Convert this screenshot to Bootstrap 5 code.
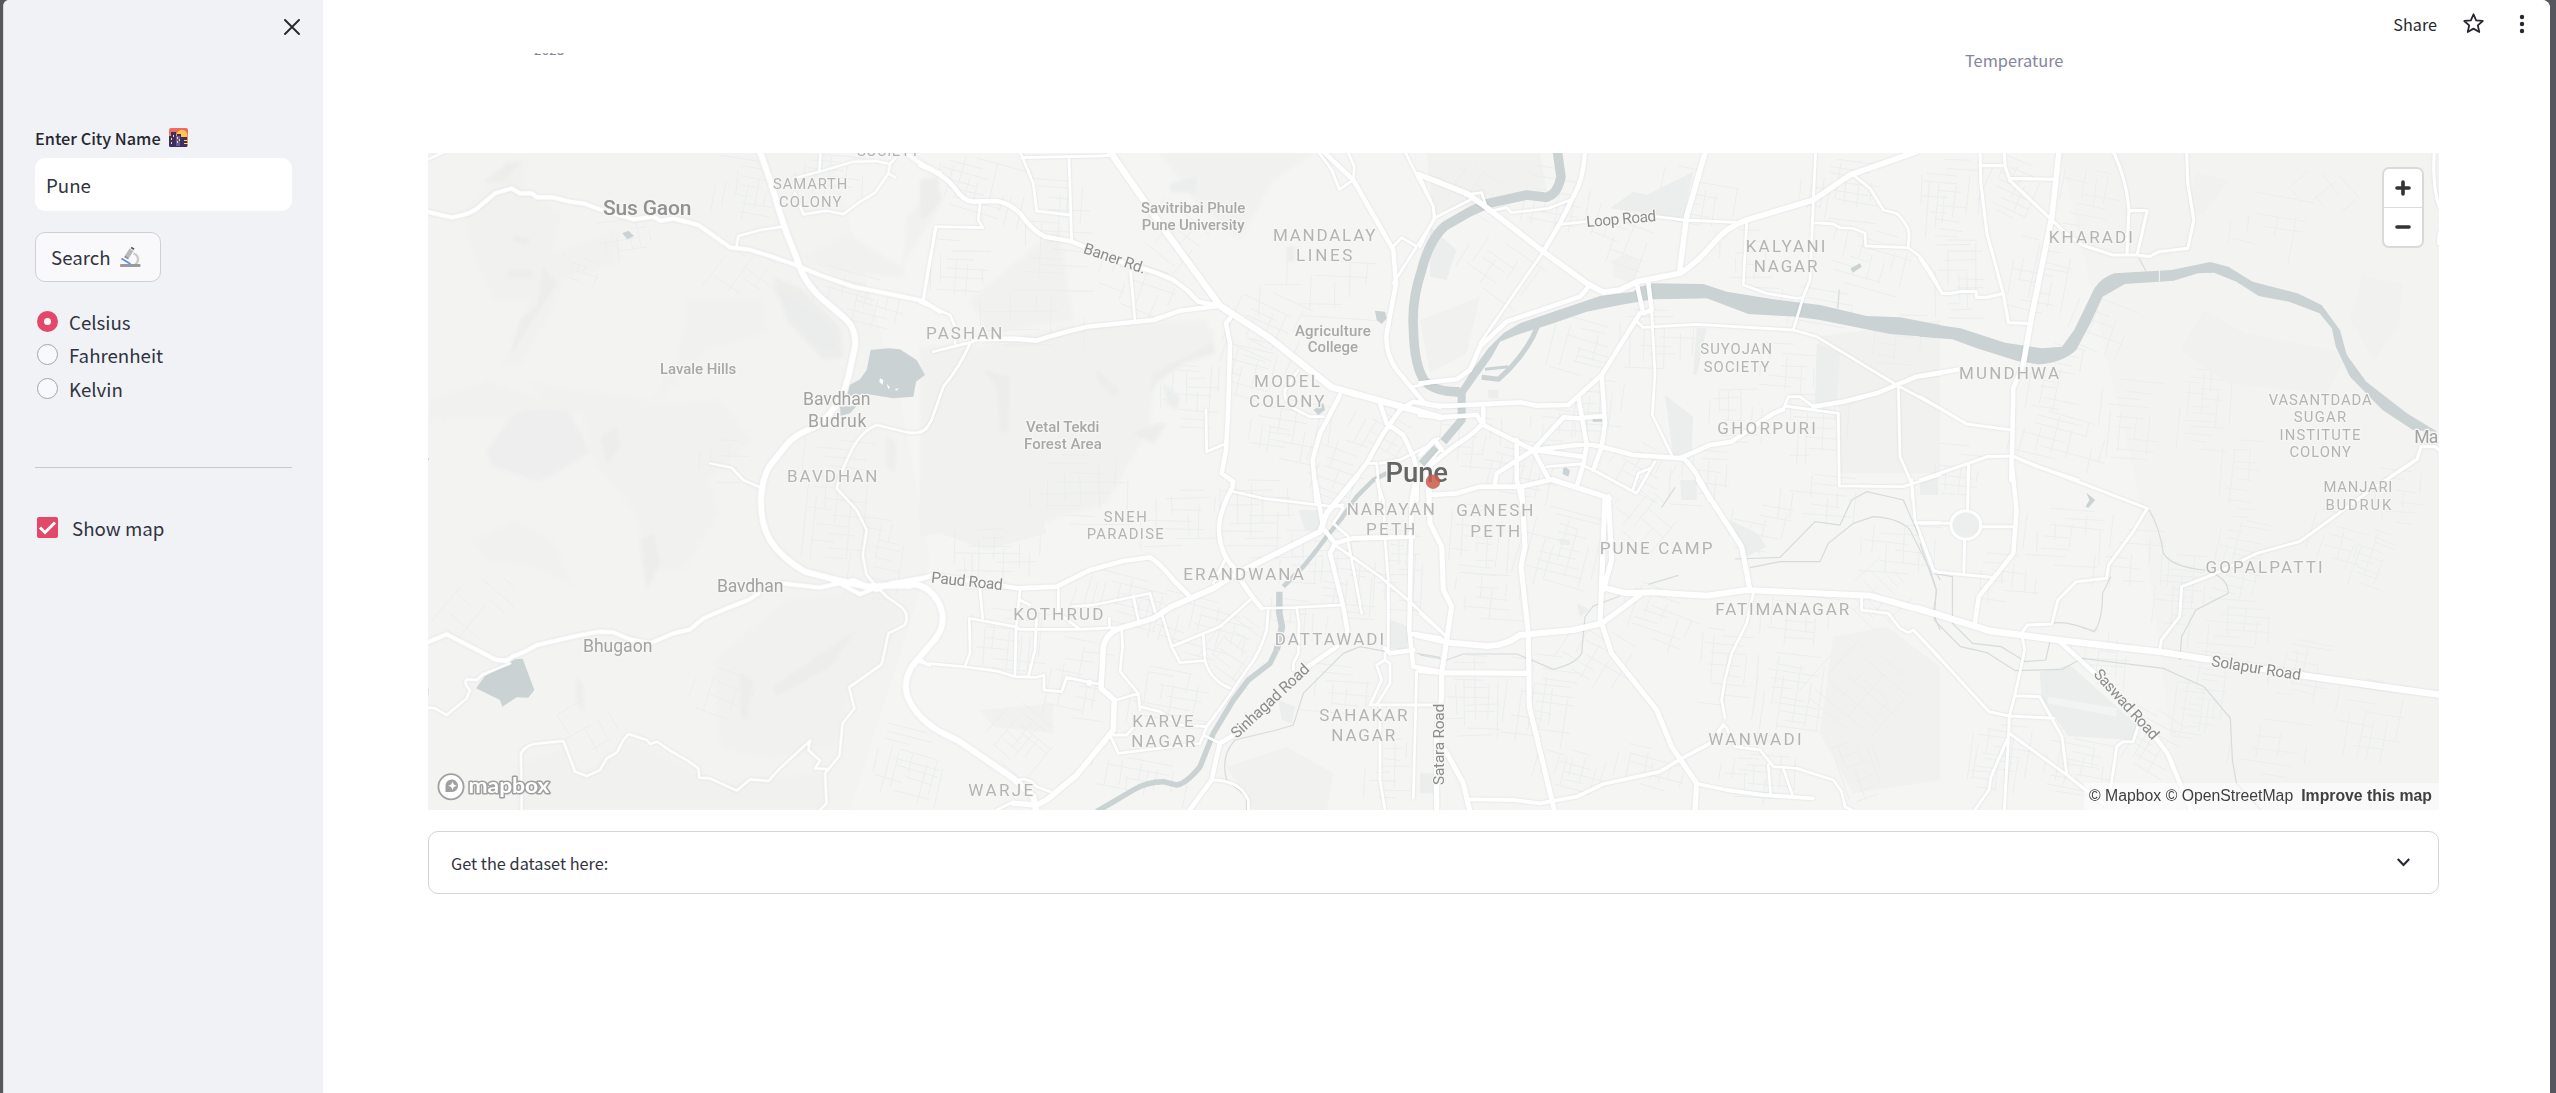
<!DOCTYPE html>
<html lang="en">
<head>
<meta charset="utf-8">
<meta name="viewport" content="width=device-width, initial-scale=1">
<title>Weather forecast</title>
<link href="https://cdn.jsdelivr.net/npm/bootstrap@5.3.0/dist/css/bootstrap.min.css" rel="stylesheet">
<style>
  body { background: #56575c; color: #31333f; font-family: "Noto Sans CJK SC", "Open Sans", sans-serif; font-size: 18.7px; line-height: 26px; overflow: hidden; }
  .app-shell { height: 1093px; margin: 0 6px 0 3px; background: #fff; border-radius: 6px 8px 0 0; overflow: hidden; border-left: 1px solid #d9dadf; }
  .side-pane { width: 319px; background: #f0f2f6; padding: 0 31px; flex: none; }
  .side-top { height: 128px; padding: 19px 0 0 249px; margin-right: -10px; }
  .side-label { font-size: 16.3px; font-weight: 500; line-height: 20px; height: 30px; color: #262730; }
  .city-input { height: 53px; border: 0; border-radius: 10px; padding: 0 11px; font-size: 18.7px; color: #31333f; background: #fff; }
  .search-btn { height: 50px; width: 126px; margin-top: 21px; background: #f9f9fb; border: 1px solid #cfd0d4; border-radius: 10px; font-size: 18.7px; color: #31333f; padding: 0 0 0 15px; }
  .unit-list { margin: 22px 0 0 2px; }
  .unit-row { height: 33.3px; gap: 11px; padding-top: 3px; line-height: 30px; }
  .unit-dot { width: 21px; height: 21px; margin: 4px 0 0; border: 1px solid #a3a4ad; background: #f9f9fb; box-shadow: none; flex: none; }
  .unit-dot:checked { border: 7px solid #e3486a; background: #f9f9fb; }
  .side-rule { margin: 63px 0 49px; border-top: 1px solid #c7c9cf; opacity: 1; }
  .map-check { gap: 14px; margin-left: 2px; line-height: 21px; }
  .top-bar { height: 53px; padding: 0 22px 6px 0; font-size: 16.2px; color: #262730; z-index: 1; }
  .star-ico { margin-left: 26px; }
  .dots-ico { margin-left: 32px; }
  .chart-tail { height: 100px; font-size: 16.4px; color: #84869a; line-height: 20px; }
  .year-tick { margin: -14px 0 0 211px; width: 60px; font-size: 13.4px; letter-spacing: .2px; }
  .axis-name { margin: -3px 0 0 1371px; }
  .block-area { width: 2011px; margin-left: 105px; }
  .map-box { height: 657px; position: relative; overflow: hidden; background: #f4f4f3; }
  .map-box svg.map-art { width: 2011px; height: 657px; display: block; }
  .zoom-ctl { position: absolute; top: 16px; right: 17px; width: 38px; height: 77px; background: #fff; border-radius: 5px; box-shadow: 0 0 0 2px rgba(0,0,0,.1); }
  .zoom-ctl .half { height: 38px; }
  .zoom-ctl .half + .half { border-top: 1px solid #ddd; }
  .map-credit { position: absolute; right: 0; bottom: 0; height: 27px; width: 355px; background: rgba(255,255,255,.5); font: 15.8px/26px "Liberation Sans", Arial, sans-serif; color: #404040; padding-right: 7px; white-space: nowrap; }
  .expander-box { margin-top: 21px; height: 63px; border: 1px solid #d3d4d8; border-radius: 10px; padding: 0 28px 0 22px; font-size: 16.3px; }

  .map-art path, .map-art ellipse { vector-effect: non-scaling-stroke; }
  .rd { fill: none; stroke: #fff; stroke-linejoin: round; stroke-linecap: round; }
  .ra { stroke-width: 6.5; } .rb { stroke-width: 4.6; } .rc { stroke-width: 2.8; }
  .road-net { filter: drop-shadow(0 0 .8px rgba(120,135,135,.22)); }
  .wat { fill: #cad2d3; stroke: none; }
  .riv { fill: none; stroke: #cad2d3; stroke-linejoin: round; }
  .canal { fill: none; stroke: #d6dcdc; stroke-width: 1.2; }
  .park { fill: #ebeeed; stroke: none; }
  .hill { fill: #f1f1f0; stroke: none; }
  .hill2 { fill: #ededec; stroke: none; }
  .relief { filter: blur(1.5px); }
  .side-st { fill: none; stroke: #eaeeee; stroke-width: 1; }
  .map-art text { font-family: Roboto, "Liberation Sans", sans-serif; paint-order: stroke; stroke: #f6f6f5; stroke-width: 2.6px; stroke-linejoin: round; }
  .t-area { font-size: 17px; fill: #b4b4b4; }
  .t-small { font-size: 14.8px; fill: #b4b4b4; }
  .t-spot { font-size: 15px; font-weight: 500; fill: #a8a8a8; }
  .t-town { font-size: 17.6px; fill: #a2a2a2; }
  .t-road { font-size: 15.5px; fill: #8c8c8c; }
</style>
</head>
<body>
<div class="app-shell d-flex">
  <aside class="side-pane d-flex flex-column">
    <div class="side-top"><svg class="d-block" width="16" height="16" viewBox="0 0 16 16" stroke="#262730" stroke-width="1.9" stroke-linecap="round"><path d="M1 1l14 14M15 1L1 15"/></svg></div>
    <div class="side-label d-flex align-items-start"><span>Enter City Name</span>
      <svg class="ms-2" width="19" height="19" viewBox="0 0 19 19"><rect width="19" height="19" rx="2" fill="#ee6a62"/><path d="M0 6h19v8H0z" fill="#f58a55"/><circle cx="13" cy="7" r="5.2" fill="#fbc84c"/><path d="M0 8h2V4h5v4h1V6h4v3h6v10H1l-1-1z" fill="#3d2f63"/><path d="M7 8h4v10H7z" fill="#6a5a9c"/><path d="M2 10h1v2H2zM4 7h1v2H4zM8 9h1v2H8zM8 13h1v2H8zM10 11h1v2h-1zM2 14h1v2H2zM15 12h3v1h-3zM15 15h4v1h-4z" fill="#f8e06a"/></svg></div>
    <input class="form-control city-input" type="text" value="Pune" aria-label="City">
    <button class="btn search-btn d-flex align-items-center" type="button"><span>Search</span>
      <svg class="ms-2" width="22" height="22" viewBox="0 0 22 22"><path d="M14.5 7.500a6 6 0 0 1 1.500 11" fill="none" stroke="#c9c9c9" stroke-width="2.200"/><path d="M2.500 12.500l9 5.500" stroke="#5b8def" stroke-width="1.800"/><path d="M10.500 2.500l4 2.500-4.500 7-4-2.500z" fill="#b9b9b9"/><path d="M12.500 .8l3 1.800-.8 1.400-3-1.800z" fill="#555"/><path d="M6 9.500l4 2.500-1 1.200-3.800-2z" fill="#8d8d8d"/><rect x="1" y="18" width="20.500" height="3" rx="1" fill="#9a9a9a"/></svg></button>
    <div class="unit-list">
      <label class="unit-row d-flex"><input class="form-check-input unit-dot" type="radio" name="unit" checked><span>Celsius</span></label>
      <label class="unit-row d-flex"><input class="form-check-input unit-dot" type="radio" name="unit"><span>Fahrenheit</span></label>
      <label class="unit-row d-flex"><input class="form-check-input unit-dot" type="radio" name="unit"><span>Kelvin</span></label>
    </div>
    <hr class="side-rule">
    <label class="map-check d-flex align-items-center"><svg width="21" height="21" viewBox="0 0 21 21"><rect width="21" height="21" rx="2" fill="#e3486a"/><path d="M3 10.500l5 5L18 5.500" fill="none" stroke="#fff" stroke-width="3"/></svg><span>Show map</span></label>
  </aside>
  <main class="flex-grow-1">
    <header class="top-bar d-flex align-items-center justify-content-end position-relative bg-white">
      <span>Share</span>
      <svg class="star-ico" width="21" height="21" viewBox="0 0 20 20"><path d="M10 1.200l2.500 5.800 6.300.6-4.700 4.200 1.400 6.300L10 14.900l-5.500 3.200 1.400-6.300L1.200 7.600l6.300-.6z" fill="none" stroke="#262730" stroke-width="1.700" stroke-linejoin="round"/></svg>
      <svg class="dots-ico" width="12" height="20" viewBox="0 0 12 20" fill="#262730"><circle cx="6" cy="3" r="2.200"/><circle cx="6" cy="10" r="2.200"/><circle cx="6" cy="17" r="2.200"/></svg>
    </header>
    <div class="chart-tail d-flex"><span class="year-tick">2023</span><span class="axis-name">Temperature</span></div>
    <div class="block-area">
      <div class="map-box">
        <svg class="map-art" viewBox="428 153 2011 657">
          <rect x="428" y="153" width="2011" height="657" fill="#f5f5f4"/>
          <path d="M428 153H830L900 400 930 560 850 810H428z" fill="#f3f3f2"/>
          <path d="M2060 153H2439V810H2180L2140 500z" fill="#f3f3f2"/>
          <!-- relief -->
          <g class="relief">
          <g transform="translate(420 0) scale(.33333)">
            <path class="hill" d="M130 640L240 520 320 480 310 560 420 640 400 760 590 690 590 790 430 840 380 960 300 1100 250 1090 330 900 220 900 150 740zM800 900L1030 900 1040 1000 860 1050 720 1200 400 1250 330 1150 700 1200 780 1050zM1150 780L1280 700 1440 800 1560 620V540L1460 650 1450 830 1260 820zM30 1200L200 1140 480 1240 20 1260z"/>
            <path class="hill2" d="M185 550L260 490 310 480 250 545zM370 800L410 850 370 910 300 1020 270 1070 300 960 350 920zM280 705l50 10-10 20-40-10zM260 810l80 0-5 25-70 0zM1060 830L1150 870 1260 980 1270 1070 1210 1080 1100 960z"/>
            <path d="M1050 850L1230 970 1255 1040 1210 1060 1130 970z" fill="#ebeded"/>
          </g>
          <g transform="translate(420 400) scale(.33333)">
            <path class="hill" d="M480 20L900 0 1000 120 860 240 900 330 800 500 700 520 640 330 520 180zM160 420L280 360 400 420 460 560 340 500 200 480zM880 780L1100 600 1400 560 1450 640 1380 790 1290 860 1250 1040 1060 1080 900 1040zM280 1100L430 1040 480 1130 640 1020 900 1150 1210 1120V1230H310z"/>
            <path class="hill2" d="M660 420l40-20 20 90-40 80zM960 820l40 20-20 120-20-20zM1060 860l160-110 90-60-80 110-160 90zM540 110l50-30 10 60-40 50zM470 830l20 30 0 80-20-40zM1400 110l30 20-10 90-20-30z"/>
            <path d="M200 155L270 50Q350 10 450 40L510 155Q400 230 350 243L220 200z" fill="#eeeeef"/>
          </g>
          <g transform="translate(920 140) scale(.33333)">
            <path class="hill" d="M0 620L180 620 420 560 860 540 880 640 700 700 690 860 620 980 560 1090 200 1200 0 1150zM150 480L420 260 440 420 460 540 200 580zM720 40L860 40 1180 40 1060 120 960 300 840 200z"/>
            <path class="hill2" d="M190 690L270 710 265 880 240 870 230 740zM700 700L800 650 870 610 870 560 885 640 790 670 710 730 690 770zM640 880l60 30 40-60-30 0zM530 690l70 60-20 20-50-50zM0 120L50 110 65 180 20 230 0 240z"/>
            <path class="park" d="M1100 320h25v45h-25zM750 130l80-20 0 50-80-5zM730 730l50 40-10 40-30-20z"/>
          </g>
          </g>
          <g transform="translate(1420 140) scale(.33333)">
            <path class="hill" d="M0 540L180 470 140 640 30 700zM580 360q50-30 80 10l-20 60-60-20zM1190 590L1560 540V1000L1260 1000 1260 820zM20 40H360L380 150 40 220z"/>
            <path class="park" d="M570 205L640 155 680 165 820 95 790 235zM735 765L820 830 815 930 760 950zM1190 610L1260 640 1250 780 1185 790zM30 260L110 330 80 420 30 410zM205 750h30v25h-30zM830 565l30 0-30 140-10 0z"/>
          </g>
          <g transform="translate(1420 480) scale(.33333)">
            <path class="hill" d="M1240 470L1400 440 1560 560V900L1300 940 1200 760z"/>
            <path class="park" d="M930 120L1010 160 1040 200 980 230zM780 0h50v60h-45zM415 175l35 5 0 15-28 0zM470 370l40 20-30 20zM0 880l40 0 0 60-40 0z"/>
          </g>
          <g transform="translate(920 480) scale(.33333)">
            <path class="hill" d="M0 0H330L380 160 200 210 60 160 0 170zM920 860L1100 800 1240 880 1220 990H1000zM180 690l220-20 0 90-180-20z"/>
            <path class="park" d="M1410 420L1470 440 1460 510 1405 505zM1135 90l60 0 10 60-50 0zM1075 660l50 20-10 50-30-10z"/>
          </g>
          <g transform="translate(1920 0) scale(.4057 .33333)">
            <path class="hill" d="M700 930L800 1000 1060 1060 1000 1180 760 1150 640 1050zM1090 830L1190 850 1180 980 1120 1080 1060 960zM680 520L760 540 700 640 660 640z"/>
          </g>
          <g transform="translate(1920 460) scale(.4057 .33333)">
            <path class="park" d="M295 635L370 615 540 800 525 840 365 828 300 715zM0 55h45v50H0z"/>
            <path d="M315 710l170 35v25l-170-40z" fill="#f2f3f3"/>
          </g>
          <!-- faint side streets, filled in by the script below -->
          <path id="sideStreets" class="side-st" d=""/>
          <!-- water -->
          <g transform="translate(420 0) scale(.33333)">
            <path class="wat" d="M1352 1050L1405 1045 1440 1048 1490 1080 1515 1125 1488 1145 1480 1190 1420 1195 1340 1182 1280 1190 1290 1155 1320 1138 1340 1110zM607 700L625 692 642 708 622 718zM1260 1220L1310 1218 1290 1240 1262 1248z"/>
            <path d="M1380 1135l10 5-2 14-10-8zM1400 1152l10 10-5 6zM1425 1168l12-4-8 8z" fill="#fff"/>
          </g>
          <g transform="translate(420 400) scale(.33333)"><path class="wat" d="M168 865L195 828 285 778 308 776 343 870 325 893 290 892 247 920 240 900z"/></g>
          <g transform="translate(920 140) scale(.33333)"><path class="wat" d="M1365 512L1395 515 1400 535 1385 552 1370 540zM1180 810L1210 788 1215 810 1195 825z"/></g>
          <g transform="translate(1420 140) scale(.33333)">
            <path class="riv" stroke-width="9.500" d="M412 34L423 110Q412 165 378 172L320 165 205 190 150 215 75 258Q28 300 5 390Q-25 480 -20 560Q-18 680 15 725Q50 758 120 755"/>
            <path class="wat" d="M105 770L150 700 205 625 250 580 300 550 400 515 540 468 640 455 660 440 700 430 850 432 920 455 1060 478 1200 495 1340 528 1440 532 1562 555V594L1410 582 1200 540 1130 530 985 522 900 490 860 475 700 478 600 495 500 515 400 550 290 585 240 605 215 650 180 700 130 770z"/>
            <path class="riv" stroke-width="5" d="M352 560Q330 620 270 685L235 718 185 712"/>
            <path class="riv" stroke-width="3" d="M195 688L265 680"/>
            <path class="riv" stroke-width="8" d="M125 760V840L70 905M50 925L5 972"/>
            <path class="wat" d="M1292 385L1320 370 1325 380 1298 398zM430 985L438 982 450 992 445 1010 428 1002zM518 838h28v7h-28z"/>
            <path class="canal" d="M1258 448L1253 505"/>
          </g>
          <g transform="translate(920 480) scale(.33333)">
            <path class="riv" stroke-width="4.500" d="M1400 -20L1360 0 1310 50 1265 115 1220 170 1190 210 1150 260 1090 320"/>
            <path class="riv" stroke-width="6.500" d="M1078 335L1078 400 1086 440 1070 510"/>
            <path class="riv" stroke-width="5.500" d="M1070 510L1050 550 985 600 940 660 880 760 840 860Q800 910 770 915L730 905Q680 905 640 930L530 995"/>
            <path class="canal" d="M1400 515L1320 500 1270 520 1150 640 1120 735 1070 750 945 780Q900 830 920 900L980 950V990M1490 520L1560 532"/>
          </g>
          <g transform="translate(1420 480) scale(.33333)">
            <path class="canal" d="M990 263L1080 245 1200 245 1225 190 1300 130 1360 110Q1440 115 1470 150L1530 270 1550 330 1540 400 1560 450M945 237L1080 232 1185 125 1260 135 1295 60 1340 35 1450 60 1520 220 1560 300M0 525L80 540 130 522 290 522 400 568Q470 550 485 520L495 410 520 378 600 348M725 82L765 22M685 313L775 286"/>
          </g>
          <g transform="translate(1920 0) scale(.4057 .33333)"><path class="wat" d="M0 967L100 985 210 1028 300 1045 350 1040 380 990 430 865Q450 830 480 820L620 810 715 786 760 800 820 845 930 880 990 915 1035 990 1052 1065 1100 1145 1200 1240 1275 1295 1215 1290 1140 1230 1060 1130 1025 1040 1015 985 985 940 910 905 835 888 780 845 725 818 685 820 625 842 505 852 450 890 420 970 385 1050Q350 1090 290 1093L240 1083 140 1045 80 1018 0 1010z"/><path d="M590 810V845" stroke="#f3f3f2"/><path class="canal" d="M540 775l18 40"/></g>
          <g transform="translate(1920 460) scale(.4057 .33333)"><path class="wat" d="M410 98L432 120 415 143 408 140 418 120z"/><path class="canal" d="M0 250L40 390 35 480 100 560 165 578 235 632 350 628 400 595 600 625 700 680 765 775 770 900 780 970 840 1050M565 150Q590 200 600 280Q620 320 700 330Q760 350 760 400L680 450 645 530 640 600M325 490Q360 480 430 515Q450 480 450 400L470 350M35 340L80 350V490L130 550 200 560 260 605 310 600 320 545"/></g>
          <!-- roads -->
          <g class="road-net">
            <g transform="translate(420 0) scale(.33333)">
              <path class="rd ra" d="M1018 450L1050 540 1080 640 1100 700 1130 775 1145 815Q1165 860 1210 900L1275 955Q1310 985 1305 1040L1285 1130 1270 1180 1245 1220"/>
              <path class="rd rb" d="M20 635L95 652Q140 645 165 630L225 580 275 565 300 580 335 580 350 592 400 592 450 605 490 610 545 630 640 658 700 650 720 662 760 655 835 675 930 742 985 748 1050 768 1120 792 1200 825 1300 860 1400 880 1510 903 1560 935M1455 455Q1500 495 1560 520"/>
              <path class="rd rc" d="M20 480L75 455M1202 450L1198 515M1120 535L1198 515 1300 485 1370 483 1410 492 1405 520 1365 578 1320 605 1270 642 1220 632 1150 643 1125 580M1405 520L1425 532M1410 492L1425 475M948 745L955 708 1020 690 1085 680M1510 900L1525 800 1548 680"/>
            </g>
            <g transform="translate(420 400) scale(.33333)">
              <path class="rd ra" d="M1245 20Q1215 65 1175 85Q1120 105 1095 140L1055 190Q1030 220 1023 290Q1020 370 1050 420Q1085 475 1155 515L1250 540 1340 560 1490 553Q1550 570 1567 640Q1575 690 1530 735L1475 800Q1440 860 1475 915Q1510 970 1570 1000L1620 1025 1780 1135 1840 1190 1850 1240"/>
              <path class="rd rb" d="M20 728L80 703 205 767Q225 783 260 782L280 768 310 757 350 735 480 705 540 695 580 697 630 718 690 730 760 700 810 688 850 655 920 625 985 600 1015 580M1085 550L1200 563 1300 540 1370 570 1410 550 1530 530M1250 545L1320 583 1380 558 1470 560"/>
              <path class="rd rc" d="M870 190L935 203 970 240 1020 262M270 790L185 825 170 840 140 838Q130 850 150 870L140 895 80 945 45 925 20 922M305 1230L303 1060Q320 1030 360 1030L430 1023 450 1075 465 1115 500 1128 540 1110 560 1075 590 1058 610 1020 625 1002 680 1020 690 1032 712 1025 750 1052 800 1080 835 1105 838 1133 870 1135 950 1172 990 1138 1045 1143 1080 1105 1170 1022 1165 1050 1200 1082 1185 1105 1220 1107M1200 1230L1220 1210 1215 1120 1258 1068 1268 970 1303 925 1287 862 1385 793 1405 700 1455 675Q1470 640 1440 618L1400 590 1370 560 1340 525 1328 465 1340 390 1310 330 1250 265Q1260 220 1290 160Q1320 95 1370 75L1460 97Q1500 103 1520 85M1500 785L1530 797"/>
            </g>
            <g transform="translate(920 140) scale(.33333)">
              <path class="rd ra" d="M570 35L730 265 900 497 1050 595 1235 742 1380 782 1560 832"/>
              <path class="rd rb" d="M0 75Q70 100 105 145Q130 185 160 185L230 183Q270 190 300 220Q340 275 375 290L450 303 600 365 700 395 760 420 800 450 835 485 900 497M160 598L280 596 350 602Q380 590 500 560L700 540 780 512 900 497M930 535L918 550 930 610 925 800 918 930 905 1000 940 1025M1210 35L1300 120 1420 330 1428 430 1400 580Q1395 640 1430 690L1480 750 1510 785M1560 800L1480 785 1440 810 1390 880 1340 970 1250 1085M1380 790L1400 850 1450 885 1480 950 1490 985V1080M1260 765L1200 880 1178 960 1190 1085"/>
              <path class="rd rc" d="M1455 35L1490 105 1540 200 1545 235 1490 320 1420 430M1490 100L1560 125M1283 35L1303 80 1300 120 1258 148 1235 90 1195 35M1415 325L1445 293 1490 320M1480 740L1560 722M300 35L340 130 350 213 450 225M305 53L540 48 575 45M447 55L455 300M180 190L175 240 188 263 48 260 10 480M0 487L90 525 105 560V610M40 635L160 605M150 610Q120 680 70 740L35 840Q20 870 0 878M632 395L645 545M858 810L860 935 915 912M1135 690L1095 750Q1090 790 1130 810L1170 830 1210 830M1340 970L1370 970 1380 1080M1380 970L1440 960 1520 920 1555 895"/>
            </g>
            <g transform="translate(920 480) scale(.33333)">
              <path class="rd ra" style="stroke-width:5.600" d="M280 970L350 975 380 960 470 885 580 750 583 660 543 625 550 500Q560 455 610 442L700 415 750 382 880 325 960 275 1200 155 1220 100 1310 -10"/>
              <path class="rd rb" d="M938 5L938 20Q890 110 898 165Q905 230 940 260L965 305 1000 355 1025 385M0 298L40 285 200 310 290 325 410 320 510 270 610 243 690 232Q720 250 760 300L810 350M1185 0L1210 145 1245 190 1230 220 1270 380 1285 470M1245 190L1300 175 1480 170M1487 0L1475 60 1468 450 1480 560 1560 575M1480 462L1560 475M1250 500L1150 570M950 760L900 790Q885 850 875 900L805 995M1480 510L1410 520 1395 505"/>
              <path class="rd rc" d="M1245 195L1380 290 1470 365 1560 450M0 535L20 550 130 560 230 573 285 590 350 592 372 585 372 630 425 635 440 592 510 608 540 612M180 330L188 415M148 415L285 440 300 448 480 448 590 443M148 415L150 520 135 558M300 330L288 450 285 585M350 400L345 510 325 590M415 322V400L480 448M455 380L520 375 690 340 705 395M640 348L655 420M300 360L330 375M568 415V445M725 400L755 500 780 548 855 542 850 465M755 500L900 440 990 360M855 542Q870 600 930 625M1045 385L1040 450Q1020 520 980 570L905 680 860 740 840 790 595 820 570 765 620 765 650 730M590 660L655 640 660 690M605 450L608 500 600 575 655 640M660 680L720 695 780 735 860 740M850 765L900 790M1025 385L1130 382 1265 375M1130 382L1137 430 1135 520 1120 550V570M915 240L880 310M940 35L1030 55 1240 80 1268 75M1240 70L1270 85 1240 130 1285 170M1285 190L1305 290 1325 400M1370 0L1390 60 1395 175 1405 300V510M1395 540L1370 555 1385 600 1350 675H1560M1395 520V540L1410 550V610L1370 675M1380 675V900L1395 990M1490 575L1480 955M875 900Q960 900 985 960V990M230 990L280 965M285 905Q320 885 350 920L390 935"/>
              <circle cx="508" cy="608" r="9" fill="#fff"/>
            </g>
            <g transform="translate(1420 140) scale(.33333)">
              <path class="rd ra" style="stroke-width:5.600" d="M0 105L140 160 210 210 370 335 500 430 550 457 600 450 650 425 780 400Q830 370 880 310Q920 260 980 240L1180 180 1290 105 1490 35M856 35L800 230 778 400"/>
              <path class="rd rb" d="M495 35Q490 110 470 150L420 250 370 335M0 785Q40 800 100 797L300 787 350 797 445 795 545 705 660 520M0 730L110 718 150 690 180 620 260 545 480 470 510 435M650 430L670 520 695 510 685 430M545 705L555 850 545 920 520 990M475 770L500 915 490 972 470 1040M0 825L60 832 170 825 190 855 340 930 385 1015 570 1075M190 795V850Q150 890 100 920L20 985M0 945L45 900 65 930M290 900V1020L305 1080M20 1000L30 1065 110 1060 180 1040 300 1040 400 1018M225 1030L230 1000 340 930 500 912 545 920 640 945 790 955Q830 990 870 1080M340 930L430 832 470 835 550 828M340 930L490 950M780 955L870 915 935 905 1060 820 1090 808M1180 800L1270 785 1370 760 1430 735 1490 710 1560 700"/>
              <path class="rd rc" d="M1090 808L1105 770 1140 770 1180 800M380 980L480 972 520 990 650 1060 705 965M640 1045L655 1000 690 985M370 335L180 610M425 252L500 245M710 230L790 240 960 248M205 215L260 203 275 218 385 205 450 180M135 165L185 158 200 205M0 110L40 200 42 235M150 180L42 235 0 320M1187 35L1180 180 1170 420 1150 470 1120 570M980 250L970 435 1040 460 1130 475 1150 472M650 545L670 562 830 553 1120 570 1190 590 1430 735 1560 805M695 515L705 700 697 825 760 955M1180 248L1240 252 1260 263 1300 265 1335 280 1337 318 1465 323M1300 105L1350 145 1390 210 1430 220Q1465 255 1467 280L1465 323 1500 350Q1540 400 1560 450M1095 798L1255 820 1258 1038 1450 1040 1560 1005M1435 735L1440 950 1475 1030 1478 1080"/>
              <path d="M65 925L0 1000" class="rd rc"/>
            </g>
            <g transform="translate(1420 480) scale(.33333)">
              <path class="rd ra" style="stroke-width:6" d="M-10 465L90 488 200 498Q250 500 300 465L460 450 545 430M560 325L620 340 700 337 860 347 980 330 1350 347 1450 375 1560 405"/>
              <path class="rd rb" style="stroke-width:5.200" d="M545 430L660 345M835 0L965 200 990 330M545 430L575 520 710 690 755 800 830 910 825 990M305 20L315 200 303 260 325 460 328 680 404 995M25 10L30 130 65 200 70 330 95 380 65 580 65 650 50 760 50 995M75 810L130 910 150 995M0 572L70 578 325 580M400 0L555 50 540 430M565 50L575 240 550 330"/>
              <path class="rd rc" d="M0 400L80 470M910 735L920 745 945 800 1020 810 1060 860 1130 865 1240 900 1265 935 1275 980 1300 992M1000 340L980 430 935 520 915 600 905 660 915 715M1045 855L1052 945M1090 865L1118 948M1325 350V390L1405 400 1440 445 1465 458 1480 450 1560 535M1475 0L1485 120 1540 270 1560 278M1485 128H1560"/>
              <path class="rd" stroke-width="3.800" d="M150 958L280 960 360 970 470 950 550 912 720 875 780 838 870 790 910 735M835 912L920 930 1030 945 1178 955"/>
            </g>
            <g transform="translate(1920 0) scale(.4057 .33333)">
              <path class="rd ra" style="stroke-width:5.600" d="M343 450L325 650 300 800 275 950 255 1090"/>
              <path class="rd rb" d="M255 1090L230 1165 228 1300 225 1440M0 1128L100 1108"/>
              <path class="rd rc" style="stroke-width:3.200" d="M148 450L150 550 165 700 205 880 218 968 262 970M207 450L210 500 220 535 335 538M148 497H207M220 540L325 660 360 700 400 735 475 765 535 765 565 770 590 755 660 745 675 660 660 550 657 450M475 450Q510 540 515 630L510 765M515 632H560L535 765M1268 450Q1262 560 1280 620M1280 700L1278 730M0 775L55 880 75 880 100 875 138 875 140 892 165 892 205 880M0 1190L115 1272 225 1290M228 1368L165 1370 120 1390 0 1440M120 1390L118 1440M228 1368L290 1400 390 1440M1150 1440L1225 1378 1235 1340 1270 1340 1280 1350"/>
            </g>
            <g transform="translate(1920 460) scale(.4057 .33333)">
              <path class="rd ra" d="M-5 445L170 512 340 540 590 575 720 600 935 645 1290 706"/>
              <path class="rd rb" d="M225 0L238 150 230 280 145 410 135 490M340 540L440 650 560 800 610 880 670 1055"/>
              <path class="rd rc" style="stroke-width:3" d="M250 0L560 145 525 215 465 315 460 355 385 365 340 420 325 492 265 495 250 520 258 570 235 700 220 770 218 830M120 20L117 150M0 190H75M150 200H230M110 240L108 335M0 225L35 335 175 352M1220 0L1100 100 970 215 935 245 830 280 720 345 645 380 640 470 595 540 590 575M0 530L170 755 220 768 330 775M235 707L295 710 350 830 362 945M220 820L362 945 455 1035M218 830L175 950 170 990 135 1050M218 830L208 1050M470 985L485 860 500 845 525 845 540 790"/>
              <ellipse cx="113" cy="195" rx="37" ry="43" fill="#edefef" stroke="#fff" stroke-width="3"/>
            </g>
          </g>
          <g id="mapLabels"></g>
          <circle cx="1433" cy="481.700" r="7.200" fill="#cb5a4a" opacity=".85"/>
          <circle cx="451" cy="786.700" r="12.600" fill="#fff" stroke="#a0a0a0" stroke-width="1.800"/>
          <path d="M445.500 792v-5.500a6.300 6.300 0 1 1 6.500 5.500z" fill="#a0a0a0"/>
          <path d="M452.500 781.500l1.300 3 3 1.300-3 1.300-1.300 3-1.300-3-3-1.300 3-1.300z" fill="#fff"/>
          <text x="468.500" y="793" textLength="81" lengthAdjust="spacingAndGlyphs" style="font:bold 21px Lato,sans-serif;fill:#fff;stroke:#a0a0a0;stroke-width:3px">mapbox</text>
        </svg>
        <div class="zoom-ctl">
          <div class="half d-flex align-items-center justify-content-center"><svg width="16" height="16" viewBox="0 0 16 16" stroke="#333" stroke-width="3.600" stroke-linecap="round"><path d="M8 2v12M2 8h12"/></svg></div>
          <div class="half d-flex align-items-center justify-content-center"><svg width="16" height="16" viewBox="0 0 16 16" stroke="#333" stroke-width="3.600" stroke-linecap="round"><path d="M2 8h12"/></svg></div>
        </div>
        <div class="map-credit d-flex justify-content-end gap-2"><span>© Mapbox © OpenStreetMap</span><b>Improve this map</b></div>
      </div>
      <div class="expander-box d-flex align-items-center justify-content-between"><span>Get the dataset here:</span>
        <svg width="13" height="9" viewBox="0 0 13 9" fill="none" stroke="#262730" stroke-width="2.100"><path d="M.8 1l5.700 6 5.700-6"/></svg></div>
    </div>
  </main>
</div>
<script src="https://cdn.jsdelivr.net/npm/bootstrap@5.3.0/dist/js/bootstrap.bundle.min.js"></script>
<script>
  // class, text, left x, right x, baseline y, optional angle
  const labels = [
    ['t-small','SOCIETY',858,918,156],['t-small','SAMARTH',774,846,189.3],['t-small','COLONY',780,840,206.5],
    ['t-spot','Lavale Hills',661,735,373.7],['t-town','Bavdhan',804,869,405.3],['t-town','Budruk',809,865,426.7],
    ['t-area','BAVDHAN',788,876,482],['t-town','Bavdhan',718,782,591.7],['t-town','Bhugaon',584,651,651.7],
    ['t-spot','Savitribai Phule',1142,1244,213.3],['t-spot','Pune University',1142.7,1243.3,229.7],
    ['t-area','MANDALAY',1274,1374,241.3],['t-area','LINES',1297,1351,261.3],['t-area','PASHAN',927,1001,339],
    ['t-spot','Agriculture',1296,1369.5,336],['t-spot','College',1308.7,1356.7,352.3],
    ['t-area','MODEL',1255,1318.5,387.3],['t-area','COLONY',1250,1323,407.3],
    ['t-spot','Vetal Tekdi',1027,1098,432.3],['t-spot','Forest Area',1025,1100.5,448.7],
    ['t-small','SNEH',1104.7,1145.3,521.7],['t-small','PARADISE',1087.7,1162.3,539],
    ['t-area','ERANDWANA',1184.3,1302.3,580],['t-area','NARAYAN',1347.7,1433.3,514.7],['t-area','PETH',1367,1414,535],
    ['t-area','KOTHRUD',1014.3,1102,619.7],['t-area','DATTAWADI',1275.7,1382.7,645.3],
    ['t-area','KARVE',1133.3,1192.3,726.7],['t-area','NAGAR',1132.3,1194,746.7],
    ['t-area','SAHAKAR',1320.3,1406,721],['t-area','NAGAR',1332.3,1393.7,741],['t-area','WARJE',969.3,1031.7,795.7],
    ['t-area','KALYANI',1746.7,1824,252],['t-area','NAGAR',1754.7,1816,272],
    ['t-small','SUYOJAN',1701.3,1770.7,354],['t-small','SOCIETY',1704.7,1768,371.7],['t-area','GHORPURI',1718.3,1814.3,434],
    ['t-area','GANESH',1457.3,1532,516.3],['t-area','PETH',1471.3,1518.7,536.7],['t-area','PUNE CAMP',1600.7,1711,554],
    ['t-area','FATIMANAGAR',1716.3,1847.7,614.7],['t-area','WANWADI',1709.3,1800,745],
    ['t-area','KHARADI',2049.8,2131.4,243],['t-area','MUNDHWA',1960,2057.5,378.7],
    ['t-small','VASANTDADA',2269.7,2370.3,405],['t-small','SUGAR',2294.8,2344.7,422.3],['t-small','INSTITUTE',2280.6,2359,439.7],['t-small','COLONY',2290.4,2349.6,457],
    ['t-small','MANJARI',2324.5,2391,492.3],['t-small','BUDRUK',2326.5,2389.8,510],['t-area','GOPALPATTI',2206.4,2321.2,572.7],
    ['t-town','Ma',2415.3,2437,443],
    ['t-road','Baner Rd.',1083.5,1146,253,19],['t-road','Paud Road',931.7,1001.4,582.7,6],['t-road','Sinhagad Road',1237.5,1336,738.3,-43],
    ['t-road','Loop Road',1587.7,1655.5,227,-5],['t-road','Satara Road',1443.7,1522.7,784,-90],
    ['t-road','Solapur Road',2211.7,2300,666.2,9],['t-road','Saswad Road',2093.6,2180,675.5,48]
  ];
  const svgns = 'http://www.w3.org/2000/svg', layer = document.getElementById('mapLabels');
  function addLabel(cls, txt, x1, x2, y, rot, css) {
    const t = document.createElementNS(svgns, 'text'), sp = (x2 - x1) / txt.length * .04;
    t.setAttribute('class', cls); t.setAttribute('x', x1 - 1); t.setAttribute('y', y);
    t.setAttribute('textLength', x2 - x1 + 2 + sp);
    if (rot) t.setAttribute('transform', `rotate(${rot} ${x1} ${y})`);
    if (css) t.setAttribute('style', css);
    t.textContent = txt; layer.appendChild(t);
  }
  labels.forEach(l => addLabel(...l));
  addLabel('', 'Sus Gaon', 604, 690, 215, 0, 'font-size:21px;font-weight:500;fill:#919191');
  addLabel('', 'Pune', 1386.5, 1446.5, 481.5, 0, 'font-size:27.500px;font-weight:500;fill:#666');
  addLabel('', 'e', 421, 429, 464, 0, 'font-size:17px;fill:#999');
  addLabel('', 'n', 421, 429, 695, 0, 'font-size:17px;fill:#999');

  // neighbourhoods of side streets: centre x, y, width, height, angle, spacing
  const quarters = [
    [745,190,60,60,10,7],[830,175,70,40,5,7],[745,280,60,60,35,10],[860,300,90,50,15,7],[625,240,40,50,80,9],[580,270,40,25,20,6],
    [835,500,70,120,5,7],[880,560,60,80,10,8],[725,465,50,50,0,10],[480,610,60,80,40,14],[590,730,60,50,60,12],[720,700,60,60,20,14],[910,765,70,70,15,7],
    [980,190,90,60,15,7],[1060,230,70,100,3,8],[960,270,60,60,2,8],[1040,320,120,60,0,14],[1140,290,90,50,20,9],[1170,240,60,60,40,12],[1320,290,120,60,3,14],[1270,330,80,70,25,9],
    [1190,400,60,70,3,6],[1250,370,60,60,15,8],[1290,430,80,60,10,7],[1340,470,70,60,20,8],[1380,430,60,50,30,8],
    [1080,490,100,70,0,8],[1000,560,90,60,0,7],[1180,520,80,60,0,7],[1260,520,80,80,0,8],[1320,560,80,60,0,7],[1120,600,90,50,15,7],[1010,640,80,60,5,7],[1200,630,100,60,15,7],
    [1080,680,60,80,10,8],[1170,700,80,60,10,7],[1020,740,60,60,40,7],[1140,780,100,40,10,7],[1240,650,60,60,35,8],[1300,620,60,40,5,7],[1350,590,60,60,5,7],[1400,570,50,80,2,6],[1340,690,80,50,5,9],[1390,770,50,60,2,7],
    [1480,200,60,50,35,12],[1560,200,70,60,10,8],[1620,240,60,60,20,8],[1500,270,80,50,35,10],[1580,350,60,60,15,8],[1660,340,80,60,2,9],[1600,410,50,60,5,8],[1700,200,80,60,10,10],
    [1750,260,60,60,0,9],[1840,190,80,60,8,7],[1870,260,80,60,15,8],[1820,310,80,40,10,9],[1900,340,50,50,5,9],[1790,370,60,50,5,8],
    [1470,440,60,60,5,8],[1520,470,80,60,12,7],[1560,430,60,40,5,8],[1640,470,60,50,30,9],[1480,540,60,70,5,7],[1560,550,80,80,15,7],[1490,600,70,50,5,9],[1640,520,60,60,40,9],[1700,480,60,60,5,8],
    [1470,700,60,90,0,7],[1540,700,70,90,8,7],[1600,660,80,60,30,8],[1660,620,80,60,20,8],[1570,770,70,40,15,6],[1650,770,70,40,15,7],[1730,670,60,80,5,8],[1790,700,70,90,8,7],[1800,620,80,50,5,8],[1760,780,80,50,5,6],[1860,770,60,40,70,6],[1860,690,90,80,40,10],[1880,600,60,60,45,9],
    [1740,420,60,60,0,7],[1820,430,60,70,2,7],[1820,500,80,50,5,8],[1760,530,60,50,10,9],[1900,550,80,50,5,9],
    [1950,200,60,80,5,6],[2010,190,50,60,25,6],[1960,280,50,80,0,6],[2040,280,60,80,12,7],[2090,200,60,60,10,9],[2100,330,60,60,20,10],[2270,230,80,70,10,14],[2320,200,60,60,50,14],
    [2060,380,60,70,10,8],[2130,420,60,80,5,8],[2205,410,50,80,5,6],[2060,440,100,50,15,8],[1960,470,50,50,5,8],[2070,540,90,60,5,8],[2130,560,70,60,5,10],[2010,580,60,50,5,8],
    [2180,590,50,70,5,6],[2240,560,50,80,12,6],[2300,670,60,60,10,6],[2370,560,40,60,20,6],[2240,480,40,80,5,8],[2340,540,60,50,15,8],[2200,700,50,80,8,5],[2100,660,60,60,5,8],[2000,760,60,70,8,6],[2080,770,70,60,10,6],[2150,740,60,60,30,7],[2370,720,70,80,10,9],[2270,750,80,60,8,14],[2400,500,50,60,5,9],[2230,630,80,60,5,8]
  ];
  let seed = 7; const rnd = () => (seed = (seed * 16807) % 2147483647) / 2147483647;
  let d = '';
  for (const [cx, cy, w, h, a, s] of quarters) {
    const r = a * Math.PI / 180, c = Math.cos(r), n = Math.sin(r);
    const pt = (x, y) => (cx + x * c - y * n).toFixed(1) + ' ' + (cy + x * n + y * c).toFixed(1);
    for (let y = -h / 2; y < h / 2; y += s * (.8 + rnd() * .8)) { const x = -w / 2 + rnd() * w * .5, l = w * (.25 + rnd() * .5); d += `M${pt(x, y)}L${pt(Math.min(w / 2, x + l), y + rnd() * 3 - 1.5)}`; }
    for (let x = -w / 2; x < w / 2; x += s * (1 + rnd() * 1.4)) { const y = -h / 2 + rnd() * h * .5, l = h * (.25 + rnd() * .5); d += `M${pt(x, y)}L${pt(x + rnd() * 3 - 1.5, Math.min(h / 2, y + l))}`; }
  }
  document.getElementById('sideStreets').setAttribute('d', d);
</script>
</body>
</html>
